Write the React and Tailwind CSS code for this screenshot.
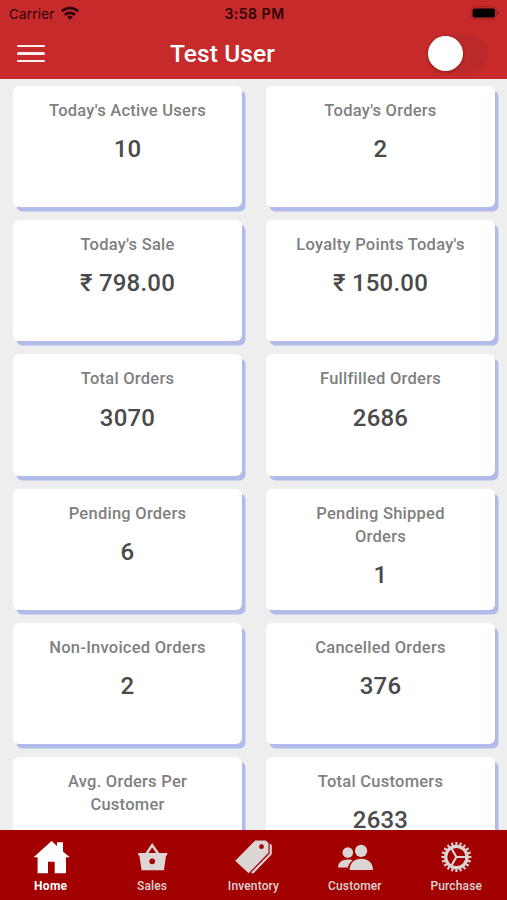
import { useState } from "react";

const stats = [
  { title: "Today's Active Users", value: "10" },
  { title: "Today's Orders", value: "2" },
  { title: "Today's Sale", value: "₹ 798.00" },
  { title: "Loyalty Points Today's", value: "₹ 150.00" },
  { title: "Total Orders", value: "3070" },
  { title: "Fullfilled Orders", value: "2686" },
  { title: "Pending Orders", value: "6" },
  { title: "Pending Shipped Orders", value: "1" },
  { title: "Non-Invoiced Orders", value: "2" },
  { title: "Cancelled Orders", value: "376" },
  { title: "Avg. Orders Per Customer" },
  { title: "Total Customers", value: "2633" },
];

function HomeIcon() {
  return (
    <svg viewBox="0 0 40 36" className="h-9 w-10" fill="currentColor">
      <path d="M20.6 2 26 7V3.3h6v9.2l6.8 5.8H35v16H23.7V22.7H17v11.6H6.6v-16h-4z" />
    </svg>
  );
}

function BasketIcon() {
  return (
    <svg viewBox="0 0 40 36" className="h-9 w-10" fill="currentColor">
      <path d="M14.3 15 20.2 6.2 26.4 15" fill="none" stroke="currentColor" strokeWidth="2.4" />
      <path
        fillRule="evenodd"
        d="M6.2 13.9h29v2.2l-1.2 1-2.1 14.2H9.6L7.4 17.1l-1.2-1zM20.2 19.4a2.9 2.9 0 1 0 0 5.8 2.9 2.9 0 0 0 0-5.8z"
      />
    </svg>
  );
}

function TagsIcon() {
  return (
    <svg viewBox="0 0 40 36" className="h-9 w-10" fill="currentColor">
      <path
        fillRule="evenodd"
        d="M22.2 1.4h10.6l2.7 2.6v9.7L15.6 34.3 2.2 21.7zM28.5 5.3a2.4 2.4 0 1 0 0 4.8 2.4 2.4 0 0 0 0-4.8z"
      />
      <path d="M36.7 4.6 38.8 6v9.3L20 34.8l-1.9-1.4 18.6-19z" />
    </svg>
  );
}

function PeopleIcon() {
  return (
    <svg viewBox="0 0 40 36" className="h-9 w-10" fill="currentColor">
      <circle cx="12.8" cy="13.5" r="5.3" />
      <path d="M3.1 28.4c0-5 4-7.8 9.7-7.8 2 0 3.7.4 4.9 1-2.6 1.6-4.3 4-4.7 6.8z" />
      <circle cx="26.1" cy="11.9" r="6.1" />
      <path d="M14.6 31c0-7.2 4.9-11.2 11.7-11.2S38 23.8 38 31z" />
    </svg>
  );
}

function GearIcon() {
  return (
    <svg viewBox="0 0 40 36" className="h-9 w-10" fill="none" stroke="currentColor">
      <circle cx="20.4" cy="18" r="13.4" strokeWidth="3.2" pathLength="80" strokeDasharray="2 2" strokeDashoffset="1" />
      <circle cx="20.4" cy="18" r="10.7" strokeWidth="3.2" />
      <path d="M20.4 18H30M20.4 18l-4.8-8.3M20.4 18l-4.8 8.3" strokeWidth="2.2" />
    </svg>
  );
}

const tabs = [
  { label: "Home", icon: HomeIcon },
  { label: "Sales", icon: BasketIcon },
  { label: "Inventory", icon: TagsIcon },
  { label: "Customer", icon: PeopleIcon },
  { label: "Purchase", icon: GearIcon },
];

function StatusBar() {
  return (
    <div className="grid h-7 grid-cols-3 items-center pl-[9px] pr-[7px] font-['Inter',sans-serif] text-[13.5px] text-[#2b0506]">
      <div className="flex items-center gap-1.5">
        <span className="tracking-[0.2px]">Carrier</span>
        <svg viewBox="0 0 18 14" className="-mt-0.5 h-3.5 w-[18px]" fill="none" stroke="currentColor" strokeWidth="2.7">
          <path d="M.9 5.3a11.6 11.6 0 0 1 16.2 0M3.9 8.9a7.3 7.3 0 0 1 10.2 0" />
          <path d="M9 13.8 6.2 11a4 4 0 0 1 5.6 0z" fill="currentColor" stroke="none" />
        </svg>
      </div>
      <span className="text-center text-sm font-semibold tracking-[0.5px]">3:58 PM</span>
      <svg viewBox="0 0 30 14" className="-mt-0.5 h-3.5 w-[30px] justify-self-end">
        <rect x=".8" y=".8" width="25.5" height="12.4" rx="3.5" fill="none" stroke="#a02022" />
        <rect x="2.5" y="2.5" width="22.5" height="9" rx="2" fill="#000" />
        <path d="M27.6 5v4c1-.3 1.6-1 1.6-2s-.6-1.7-1.6-2z" fill="#8d1b1d" />
      </svg>
    </div>
  );
}

function Header() {
  const [on, setOn] = useState(false);

  return (
    <header className="h-[79px] shrink-0 bg-[#c62a2b]">
      <StatusBar />
      <div className="flex h-[51px] items-center justify-between pl-[17px] pr-[19px] text-white">
        <button aria-label="Menu" className="flex w-[125px] flex-col gap-[5px]">
          <span className="h-[2.4px] w-7 rounded-full bg-[#fff1f0]" />
          <span className="h-[2.4px] w-7 rounded-full bg-[#fff1f0]" />
          <span className="h-[2.4px] w-7 rounded-full bg-[#fff1f0]" />
        </button>
        <h1 className="mr-auto w-[161px] whitespace-nowrap pt-0.5 text-center text-[24.5px] font-medium tracking-[0.1px]">
          Test User
        </h1>
        <button
          role="switch"
          aria-checked={on}
          aria-label="Status"
          onClick={() => setOn(!on)}
          className={`flex h-[39px] w-[61px] items-center rounded-full bg-[#bc292a] px-px ${on ? "justify-end" : "justify-start"}`}
        >
          <span className="size-[35px] rounded-full bg-white shadow-[0_1px_3px_rgba(0,0,0,0.3)]" />
        </button>
      </div>
    </header>
  );
}

function StatCard({ title, value }) {
  return (
    <div className="h-[121.5px] rounded-md bg-white px-7 pt-[13px] text-center shadow-[3.5px_4.5px_0_#b0bbe9]">
      <h2 className="text-[16.5px]/[23.3px] font-medium tracking-[0.25px] text-[#808080]">
        {title}
      </h2>
      {value && (
        <p className="mt-2.5 text-2xl/[35px] font-medium tracking-[0.2px] text-[#4a4a4a]">{value}</p>
      )}
    </div>
  );
}

export default function App() {
  return (
    <div className="flex h-screen flex-col overflow-hidden bg-[#eeeeef] font-['Roboto',sans-serif]">
      <Header />
      <main className="min-h-0 flex-1 overflow-hidden pl-[13px] pr-3 pt-[6.7px]">
        <div className="grid grid-cols-2 gap-x-6 gap-y-[12.8px]">
          {stats.map((stat) => (
            <StatCard key={stat.title} {...stat} />
          ))}
        </div>
      </main>
      <nav className="grid h-[70px] shrink-0 grid-cols-5 bg-[#a30000] pt-[9px]">
        {tabs.map(({ label, icon: Icon }, i) => (
          <button
            key={label}
            className={`flex flex-col items-center text-xs/[22px] ${i === 0 ? "font-bold tracking-[0.3px] text-white" : "font-medium tracking-[0.15px] text-[#dcd5d5]"}`}
          >
            <Icon />
            <span>{label}</span>
          </button>
        ))}
      </nav>
    </div>
  );
}
